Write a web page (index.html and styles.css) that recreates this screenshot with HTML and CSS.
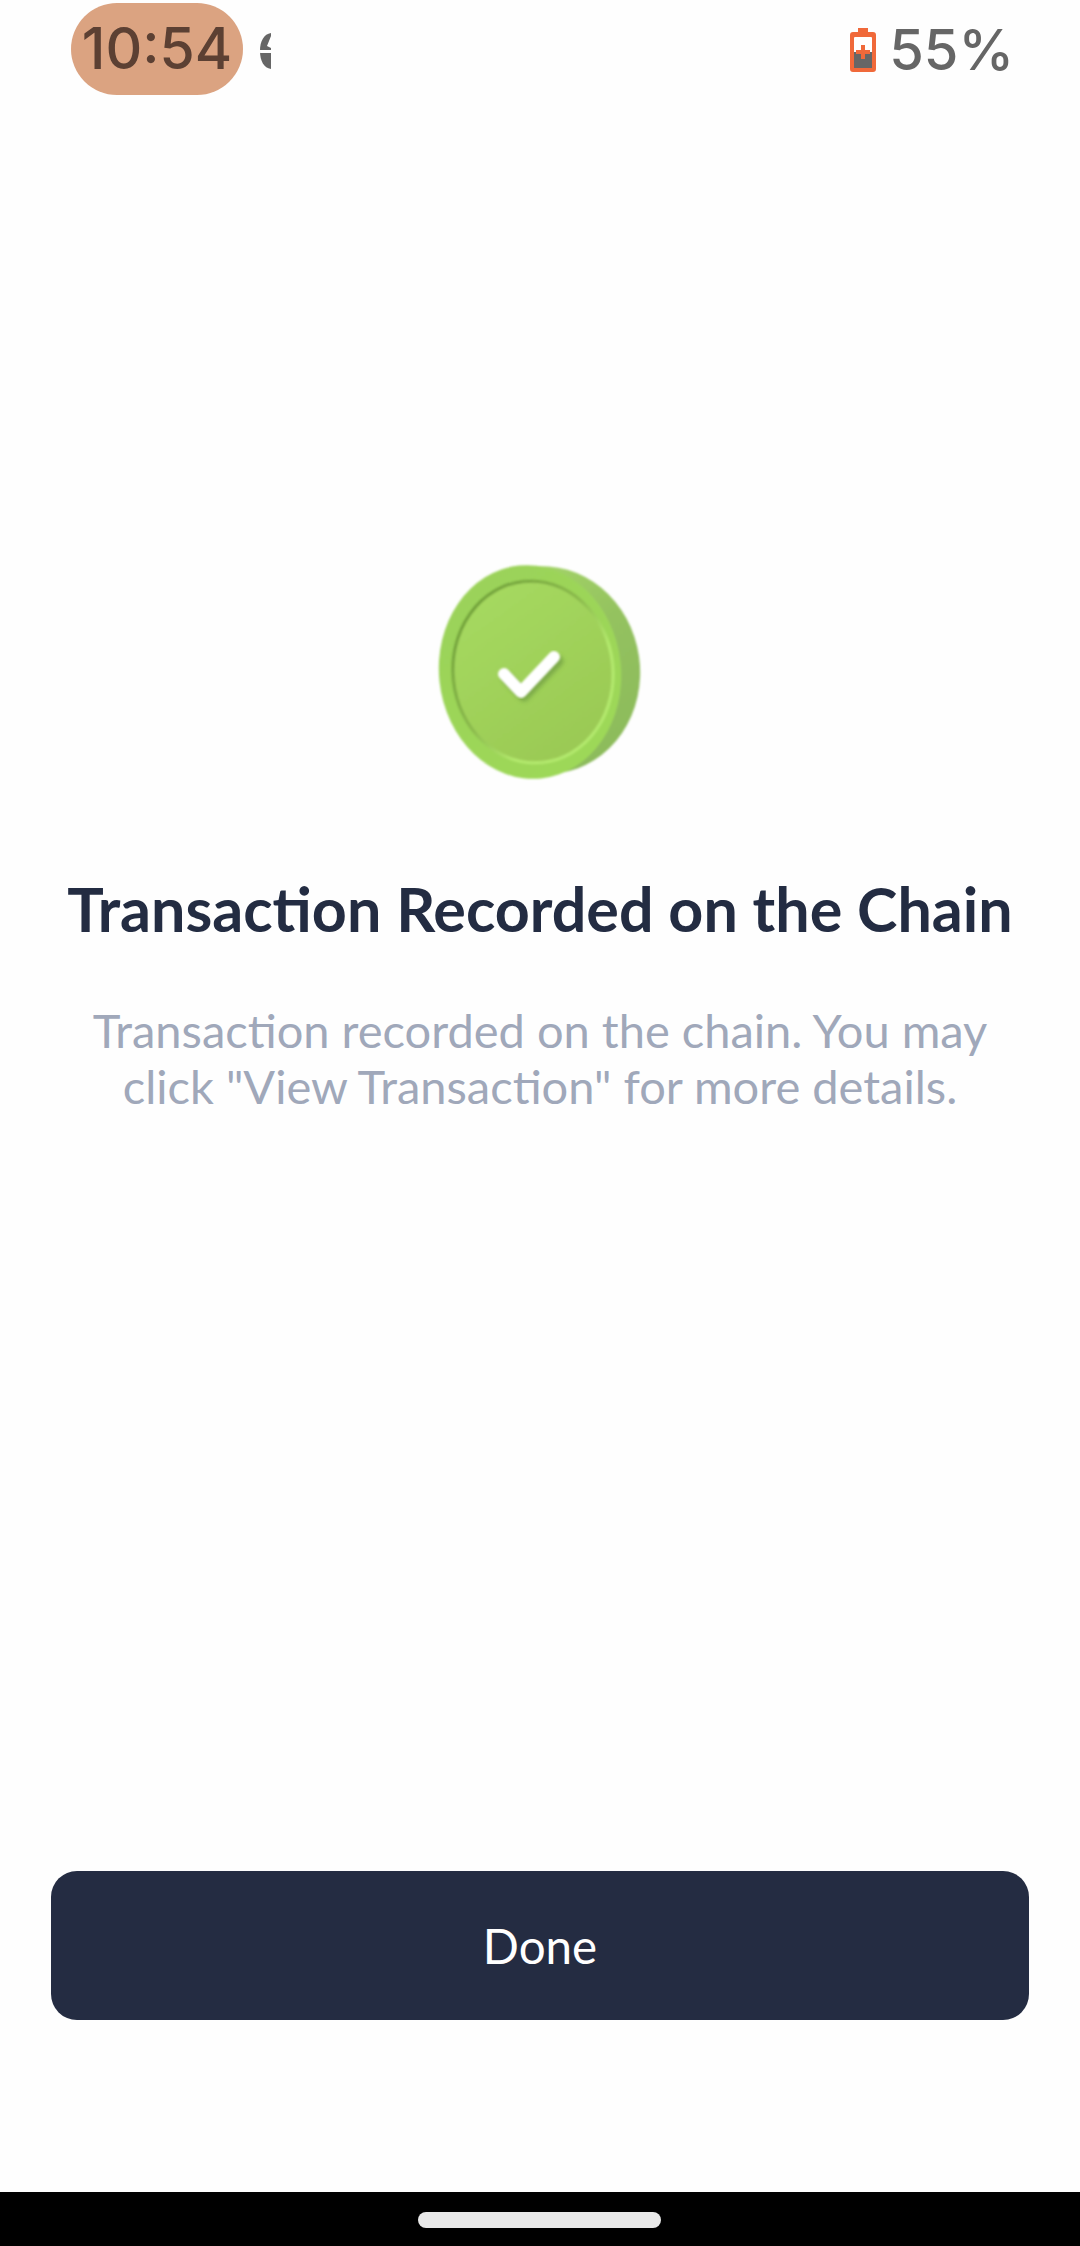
FILE: index.html
```html
<!DOCTYPE html>
<html lang="en">
<head>
<meta charset="utf-8">
<title>Transaction Recorded</title>
<link rel="stylesheet" href="styles.css">
</head>
<body>
<div class="screen">
  <header class="status">
    <div class="status-left">
      <span class="clock">10:54</span>
      <svg class="cut-icon" width="11" height="36" viewBox="0 0 11 36"><path d="M11 0C4 1 0 8 0 18s4 17 11 18V20H0v-3h11z" fill="#666"/><path d="M11 3 7 13l4 2z" fill="#fff"/></svg>
    </div>
    <div class="status-right">
      <svg class="battery" width="26" height="44" viewBox="0 0 26 44">
        <path d="M8 0h10v4h5a3 3 0 0 1 3 3v34a3 3 0 0 1-3 3H3a3 3 0 0 1-3-3V7a3 3 0 0 1 3-3h5z" fill="#f0693a"/>
        <rect x="4" y="9" width="18" height="31" rx="1" fill="#fff"/>
        <rect x="4" y="24" width="18" height="16" fill="#666"/>
        <path d="M11 17h4v5h5v4h-5v5h-4v-5H6v-4h5z" fill="#f0693a"/>
      </svg>
      <span class="percent">55%</span>
    </div>
  </header>

  <main class="content">
    <svg class="coin" width="240" height="240" viewBox="0 0 240 240">
      <defs>
        <linearGradient id="side" x1="0.3" y1="0" x2="0.7" y2="1">
          <stop offset="0" stop-color="#a6d76a"/>
          <stop offset="0.45" stop-color="#94c25f"/>
          <stop offset="1" stop-color="#8cbb5b"/>
        </linearGradient>
        <linearGradient id="face" x1="0.2" y1="0" x2="0.7" y2="1">
          <stop offset="0" stop-color="#a6da60"/>
          <stop offset="1" stop-color="#9ac954"/>
        </linearGradient>
        <linearGradient id="rim" x1="0.2" y1="0" x2="0.8" y2="1">
          <stop offset="0" stop-color="#9bd25a"/>
          <stop offset="1" stop-color="#9ed959"/>
        </linearGradient>
        <linearGradient id="ring" gradientUnits="userSpaceOnUse" x1="40" y1="50" x2="185" y2="195">
          <stop offset="0" stop-color="#6a9a35"/>
          <stop offset="0.45" stop-color="#8ab94c"/>
          <stop offset="0.7" stop-color="#b4ea6e"/>
          <stop offset="1" stop-color="#b4ea6e"/>
        </linearGradient>
        <filter id="soft" x="-20%" y="-20%" width="140%" height="140%"><feGaussianBlur stdDeviation="0.9"/></filter>
        <filter id="softer" x="-30%" y="-30%" width="160%" height="160%"><feGaussianBlur stdDeviation="2"/></filter>
      </defs>
      <g filter="url(#soft)">
        <ellipse cx="125" cy="120" rx="95" ry="104" transform="rotate(-8 125 120)" fill="url(#side)"/>
        <ellipse cx="110" cy="122" rx="91" ry="107" transform="rotate(-6 110 122)" fill="url(#rim)"/>
      </g>
      <ellipse cx="113" cy="122" rx="80" ry="91" transform="rotate(-6 113 122)" fill="url(#face)" stroke="url(#ring)" stroke-width="3" filter="url(#soft)"/>
      <path d="M87 128 104 146 138 111" fill="none" stroke="#5f8a3a" stroke-width="11" stroke-linecap="round" stroke-linejoin="round" opacity="0.55" filter="url(#softer)"/>
      <path d="M84 124 101 142 134 107" fill="none" stroke="#fff" stroke-width="12" stroke-linecap="round" stroke-linejoin="round" filter="url(#soft)"/>
    </svg>
    <h1 class="title">Transaction Recorded on the Chain</h1>
    <p class="message">Transaction recorded on the chain. You may<br>click "View Transaction" for more details.</p>
    <button class="done" type="button">Done</button>
  </main>

  <footer class="nav"><span class="home-pill"></span></footer>
</div>
</body>
</html>
```
FILE: styles.css
```css
* { box-sizing: border-box; }
html, body { margin: 0; padding: 0; background: #fff; }
.screen {
  width: 1080px;
  height: 2246px;
  display: flex;
  flex-direction: column;
  overflow: hidden;
  background: #fefefe;
}
.status {
  height: 100px;
  padding: 3px 66px 0 71px;
  display: flex;
  justify-content: space-between;
  align-items: flex-start;
  flex: none;
}
.status-left { display: flex; align-items: center; gap: 17px; }
.clock {
  width: 172px;
  height: 92px;
  border-radius: 46px;
  background: #dba381;
  color: #5c4033;
  font: 500 57px/92px Inter, sans-serif;
  text-align: center;
}
.cut-icon { margin-top: 4px; }
.status-right { display: flex; align-items: center; gap: 13px; padding-top: 25px; }
.percent { color: #666; font: 500 56px/44px Inter, sans-serif; }
.content {
  flex: 1;
  display: flex;
  flex-direction: column;
  align-items: center;
  padding: 450px 51px 172px;
}
.coin { display: block; flex: none; }
.title {
  margin: 84px 0 0;
  color: #232c42;
  font: 700 61px/70px Lato, sans-serif;
  font-variant-ligatures: common-ligatures;
  text-align: center;
  white-space: nowrap;
}
.message {
  margin: 58px 0 0;
  color: #a0a8ba;
  font: 400 47px/56px Lato, sans-serif;
  font-variant-ligatures: common-ligatures;
  text-align: center;
}
.done {
  margin-top: auto;
  width: 100%;
  height: 149px;
  border: 0;
  border-radius: 26px;
  background: #242c42;
  color: #fff;
  font: 400 47.5px/1 Lato, sans-serif;
}
.nav {
  height: 54px;
  flex: none;
  background: #000;
  display: flex;
  justify-content: center;
  padding: 20px 2px 0 0;
}
.home-pill {
  width: 243px;
  height: 16px;
  border-radius: 8px;
  background: #e9e9e9;
}
```
